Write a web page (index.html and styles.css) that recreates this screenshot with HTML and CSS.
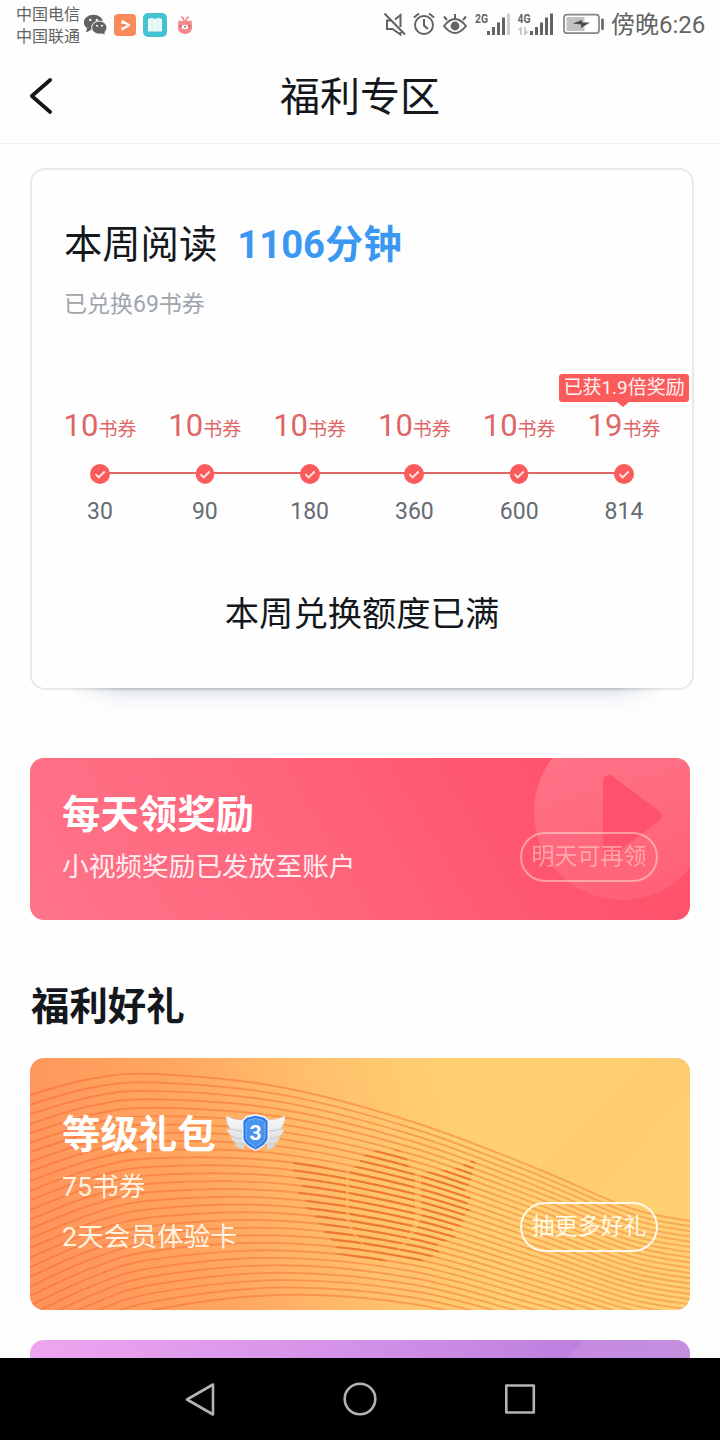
FILE: index.html
```html
<!DOCTYPE html>
<html lang="zh-CN">
<head>
<meta charset="utf-8">
<title>福利专区</title>
<link rel="stylesheet" href="styles.css">
</head>
<body>
<div class="status">
  <div class="carriers"><span>中国电信</span><span>中国联通</span></div>
  <svg class="apps" width="112" height="28" viewBox="84 12 112 28">
    <g fill="#636363">
      <ellipse cx="93.500" cy="22.300" rx="9.700" ry="7.600"/><path d="M87 28l-1 4.500 6-3z"/>
      <ellipse cx="99.300" cy="27.600" rx="7.700" ry="6.600" stroke="#fefefe" stroke-width="1"/><path d="M101 33l3.500 1.500 0-4z"/>
    </g>
    <g fill="#fff"><circle cx="90.300" cy="19.900" r="1.200"/><circle cx="96.800" cy="19.900" r="1.200"/><circle cx="97" cy="25.700" r="1"/><circle cx="102" cy="25.700" r="1"/></g>
    <rect x="114" y="14" width="22" height="22" rx="4" fill="#fb8a5b"/>
    <path d="M122.500 24v-2.800l6.500 3.800-6.500 4.200v-2" fill="none" stroke="#fff" stroke-width="2.200" stroke-linejoin="round"/>
    <rect x="143" y="13" width="24" height="24" rx="5" fill="#43c3cf"/>
    <path d="M148 19q3.500-2 7 0 3.500-2 7 0v12.500h-14z" fill="#eefafa"/>
    <path d="M152 18.500v13M158 18.500v13" stroke="#c6eef0" stroke-width=".8"/>
    <g fill="none" stroke="#f0898c" stroke-width="1.400"><path d="M184 21.500q0-4-3-4.500M186 21.500q0-4 3-4.500"/></g>
    <path d="M178.500 20.500q3 1.200 6.500-.5 3.500 1.700 6.500.5l.7 6.500q-.3 7-7.200 7t-7.200-7z" fill="#f28a8d"/>
    <ellipse cx="185" cy="27" rx="3.200" ry="2.200" fill="#fff"/>
    <g fill="#7d4650"><circle cx="185" cy="26.600" r=".9"/><circle cx="180.500" cy="26" r=".7"/><circle cx="189.500" cy="26" r=".7"/></g>
  </svg>
  <svg class="signals" width="224" height="28" viewBox="382 10 224 28">
    <g fill="none" stroke="#636363" stroke-width="2">
      <path d="M400.500 27V15l-5.500 4.500M391 20.500h-4v8.500h5.500l8 5.500v-2.500M384.500 13.500l20.500 21"/>
      <circle cx="424" cy="25" r="9"/><path d="M424 19v6.500l4 3.500M414 17.500l5-4M434 17.500l-5-4"/>
      <path d="M444 26q11-14 22 0-11 14-22 0zM455 18v-4M447 20l-3-3.500M463 20l3-3.500"/>
    </g>
    <circle cx="455" cy="26" r="4.400" fill="#636363"/>
    <g class="net"><text x="475" y="22.500" textLength="13" lengthAdjust="spacingAndGlyphs">2G</text><text x="517.500" y="22.500" textLength="13" lengthAdjust="spacingAndGlyphs">4G</text></g>
    <g stroke="#636363" stroke-width="3"><path d="M488.500 35v-4M493.500 35v-8M498.500 35V22.500M503.500 35V17.500M531.500 35v-4M536.500 35v-8M541.500 35V22.500M546.500 35V17.500M551.500 35V13.500"/><path d="M508.500 35V13.500" stroke="#cdcdcd"/></g>
    <path d="M518.500 30l2.500-2v7M525 27v7l2.500-2.500" fill="none" stroke="#c8c8c8" stroke-width="1.800"/>
    <rect x="564" y="14.700" width="35" height="18.500" rx="3" fill="none" stroke="#858585" stroke-width="1.700"/>
    <path d="M566.500 17h18v14h-18z" fill="#c2c2c2"/>
    <path d="M572.500 23.500l9.500-3.500v2.500h8l-9 5.500v-3.500z" fill="#4b4b4b"/>
    <rect x="601.200" y="18.500" width="2.600" height="11.500" rx="1" fill="#636363"/>
  </svg>
  <span class="time">傍晚6:26</span>
</div>
<header class="header">
  <svg class="back" width="24" height="38" viewBox="0 0 24 38"><path d="M21.200 3L2.800 19l18.400 16" fill="none" stroke="#14171c" stroke-width="3.700" stroke-linecap="round" stroke-linejoin="round"/></svg>
  <h1>福利专区</h1>
</header>
<main class="content">
  <section class="reading">
    <div class="reading-title">本周阅读<b>1106分钟</b></div>
    <div class="redeemed">已兑换69书券</div>
    <div class="steps">
      <div class="step"><div class="amount">10<small>书券</small></div><svg class="dot" viewBox="0 0 20 20"><circle cx="10" cy="10" r="10"/><path d="M5.500 10.200l3.200 3.300 6-6"/></svg><div class="minutes">30</div></div>
      <div class="step"><div class="amount">10<small>书券</small></div><svg class="dot" viewBox="0 0 20 20"><ellipse cx="10" cy="10" rx="9.300" ry="10"/><path d="M5.500 10.200l3.200 3.300 6-6"/></svg><div class="minutes">90</div></div>
      <div class="step"><div class="amount">10<small>书券</small></div><svg class="dot" viewBox="0 0 20 20"><circle cx="10" cy="10" r="10"/><path d="M5.500 10.200l3.200 3.300 6-6"/></svg><div class="minutes">180</div></div>
      <div class="step"><div class="amount">10<small>书券</small></div><svg class="dot" viewBox="0 0 20 20"><circle cx="10" cy="10" r="10"/><path d="M5.500 10.200l3.200 3.300 6-6"/></svg><div class="minutes">360</div></div>
      <div class="step"><div class="amount">10<small>书券</small></div><svg class="dot" viewBox="0 0 20 20"><ellipse cx="10" cy="10" rx="9.300" ry="10"/><path d="M5.500 10.200l3.200 3.300 6-6"/></svg><div class="minutes">600</div></div>
      <div class="step"><div class="bubble">已获1.9倍奖励</div><div class="amount">19<small>书券</small></div><svg class="dot" viewBox="0 0 20 20"><circle cx="10" cy="10" r="10"/><path d="M5.500 10.200l3.200 3.300 6-6"/></svg><div class="minutes">814</div></div>
    </div>
    <div class="full">本周兑换额度已满</div>
  </section>
  <div class="card-shadow"></div>
  <section class="banner daily">
    <svg class="art" viewBox="0 0 660 162">
      <defs><linearGradient id="disc" x1="0" y1="0" x2="0" y2="1"><stop offset="0" stop-color="#fff" stop-opacity=".2"/><stop offset="1" stop-color="#fff" stop-opacity=".08"/></linearGradient></defs>
      <circle cx="592" cy="54" r="88" fill="url(#disc)"/>
      <path d="M579 23v70l47-35z" fill="#ff526c" stroke="#ff526c" stroke-width="12" stroke-linejoin="round"/>
    </svg>
    <div class="banner-text"><h2>每天领奖励</h2><p>小视频奖励已发放至账户</p></div>
    <div class="pill faded">明天可再领</div>
  </section>
  <h2 class="section-title">福利好礼</h2>
  <section class="banner level">
    <svg class="art" viewBox="0 0 660 252">
      <defs>
        <linearGradient id="wave" gradientUnits="userSpaceOnUse" x1="0" y1="0" x2="660" y2="0"><stop offset="0" stop-color="#f9703c" stop-opacity=".66"/><stop offset=".5" stop-color="#f5803e" stop-opacity=".6"/><stop offset="1" stop-color="#f29045" stop-opacity=".6"/></linearGradient>
        <linearGradient id="ray" x1="0" y1="0" x2="1" y2="1"><stop offset="0" stop-color="#f7b95f" stop-opacity=".4"/><stop offset=".7" stop-color="#f7b95f" stop-opacity="0"/></linearGradient>
        <clipPath id="wings">
          <path d="M263 101l53 13v48q5 22 42 42l-28-3-30-7 8-6-15-14 8-3-19-9 4-5-14-10 5-3-12-13 8-3-10-13z"/>
          <path d="M319 116l1-6 8-2 4-10 15-6h22l8 8 2 9 6 6v43q-3 24-29 44-33-18-37-44z"/>
          <path d="M391 114v43q-5 26-30 41l27 7 21-10-2-8 19-8-4-7 13-6-3-6 9-9-4-5 4-7-7-5 6-9 6-24-19 9-26 4z"/>
        </clipPath>
      </defs>
      <path d="M622 0L505 115l155 49V0z" fill="url(#ray)"/>
      <g id="waves" fill="none" stroke="url(#wave)" stroke-width="1.900"></g>
      <g clip-path="url(#wings)"><g id="emblem" fill="none" stroke="#ed7a31" stroke-width="2.100"></g></g>
    </svg>
    <div class="banner-text">
      <h2>等级礼包<svg class="badge" width="62" height="40" viewBox="0 0 62 40">
        <defs><linearGradient id="silver" x1="0" y1="0" x2="0" y2="1"><stop offset="0" stop-color="#fafafa"/><stop offset="1" stop-color="#d4d4d4"/></linearGradient></defs>
        <g id="wing"><path d="M1 3q8 4 18 4v29q-5 0-9-4l3-1q-6-2-7-7h3q-6-2-7-8l4 1Q1 11 1 3z" fill="url(#silver)" stroke="#d5ceca" stroke-width=".5"/><path d="M6 16q5 2 11 2M9 24q4 2 8 1.500M13 31l5 0" fill="none" stroke="#c9c9c9"/></g>
        <use href="#wing" transform="translate(61 0) scale(-1 1)"/>
        <path d="M30.500 1l9 2 4.500 4v19q-2 7-13.500 12Q19 33 17 26V7l4.500-4z" fill="#eaf3ff"/>
        <path d="M30.500 2.700l8.500 2 3.500 3.300v18q-2 6-12 10.500Q20.500 32 18.500 26V8L22 4.700z" fill="#2b7ae4"/>
        <path d="M30.500 5.500l7 1.500 2.500 2.500v16q-2 4.500-9.500 8.500-7.500-4-9.500-8.500v-16L23.500 7z" fill="#4793ef" stroke="#bcd9ff" stroke-width="1" stroke-dasharray="1.300 1.300"/>
        <text x="30.500" y="26.500" text-anchor="middle">3</text>
      </svg></h2>
      <p>75书券</p><p>2天会员体验卡</p>
    </div>
    <div class="pill">抽更多好礼</div>
  </section>
  <section class="banner next"><svg class="art" viewBox="0 0 660 162"><path d="M554 0l-19 20v142h125V0z" fill="#c993e1" opacity=".6"/></svg></section>
</main>
<nav class="nav">
  <svg width="720" height="82" viewBox="0 0 720 82" fill="none" stroke="#b3b3b3" stroke-width="2.600" stroke-linejoin="round"><path d="M213 26.500v30L187 41.500z"/><circle cx="360" cy="41" r="15.300"/><rect x="506.300" y="27.500" width="27.500" height="27"/></svg>
</nav>
<script src="waves.js"></script>
</body>
</html>
```
FILE: styles.css
```css
* { box-sizing: border-box; margin: 0; padding: 0; }
body { width: 720px; height: 1440px; overflow: hidden; display: flex; flex-direction: column; background: #fefefe; color: #14171c; font-family: Roboto, "Noto Sans CJK SC", sans-serif; }
svg { display: block; flex: none; }
.status { height: 48px; flex: none; display: flex; align-items: flex-start; padding: 2px 0 0 16px; color: #636363; }
.carriers { display: flex; flex-direction: column; width: 68px; flex: none; padding-top: 2px; font-size: 16px; line-height: 22px; white-space: nowrap; }
.apps { margin-top: 10px; }
.signals { margin: 8px 0 0 186px; }
.net { font: bold 13px Roboto, sans-serif; fill: #636363; }
.time { margin-left: 5px; font-size: 24px; line-height: 47px; white-space: nowrap; }
.header { height: 96px; flex: none; display: grid; grid-template-columns: 60px 1fr 60px; align-items: center; border-bottom: 1px solid #f0f0f0; }
.back { margin-left: 29px; }
.header h1 { padding-top: 4px; text-align: center; font-size: 40px; line-height: 60px; font-weight: 400; }
.content { flex: 1; min-height: 0; overflow: hidden; padding: 24px 30px 0; }
.reading { width: 664px; height: 522px; border: 2px solid #e9e9e9; border-radius: 15px; background: #fefefe; padding: 47px 0 0 32px; }
.reading-title { font-size: 38.300px; line-height: 56px; white-space: nowrap; }
.reading-title b { margin-left: 20px; color: #3b98f2; }
.redeemed { margin-top: 15px; font-size: 23px; line-height: 34px; color: #9ea5ad; }
.steps { display: grid; grid-template-columns: repeat(6, 104.800px); margin: 85px 0 0 -16.400px; }
.step { position: relative; display: flex; flex-direction: column; align-items: center; }
.step:not(:last-child)::after { content: ""; position: absolute; left: calc(50% + 9px); right: calc(-50% + 9px); top: 65px; height: 2px; background: #e06766; }
.amount { font-size: 31px; line-height: 38px; height: 38px; color: #df6666; white-space: nowrap; }
.amount small { font-size: 19px; }
.dot { width: 20px; height: 20px; margin-top: 19px; fill: #fc5b5c; }
.dot path { fill: none; stroke: #ffe9e9; stroke-width: 1.800; }
.minutes { margin-top: 12px; font-size: 23px; line-height: 32px; color: #656b73; }
.bubble { position: absolute; top: -33px; left: -12.500px; width: 130px; height: 28px; border-radius: 3px; background: #fc5b5c; color: #fff2f2; font-size: 19px; line-height: 28px; text-align: center; white-space: nowrap; }
.bubble::after { content: ""; position: absolute; top: 28px; left: 58px; border: 6px solid transparent; border-top: 5px solid #fc5b5c; border-bottom: 0; }
.full { margin-top: 61px; padding-right: 32px; font-size: 34.300px; line-height: 50px; text-align: center; }
.card-shadow { width: 600px; height: 28px; margin: -2px 0 0 38px; background: linear-gradient(rgba(85,105,125,.28), rgba(120,138,170,.14) 18%, rgba(150,165,190,.05) 50%, transparent); mask-image: linear-gradient(90deg, transparent, #000 9%, #000 91%, transparent); }
.banner { position: relative; width: 660px; border-radius: 14px; overflow: hidden; color: #fff; display: flex; justify-content: space-between; padding: 0 32px; }
.art { position: absolute; inset: 0; width: 100%; }
.banner-text, .pill { position: relative; }
.banner h2 { font-size: 38.400px; line-height: 56px; font-weight: 700; }
.banner p { font-size: 26.700px; line-height: 40px; color: rgba(255,255,255,.9); }
.pill { width: 138px; height: 50px; border: 2px solid #fffbe8; border-radius: 25px; font-size: 23px; line-height: 46px; text-align: center; white-space: nowrap; color: #fffbe8; }
.faded { opacity: .43; }
.daily { height: 162px; margin-top: 42px; padding-top: 29px; background: linear-gradient(60deg, #ff7489 0%, #ff667d 40%, #ff566f 72%, #ff4f69 100%); }
.daily p { margin-top: 4px; }
.daily .pill { margin-top: 45px; }
.section-title { margin: 58px 0 23px 1px; font-size: 38.400px; line-height: 57px; font-weight: 700; }
.level { height: 252px; padding-top: 49px; background: linear-gradient(75deg, #ff9158 0%, #ffa661 28%, #ffc06b 48%, #ffcf72 65%, #ffcf72 100%); }
.level h2 { display: flex; gap: 9px; align-items: center; }
.level p { line-height: 50px; color: rgba(255,253,240,.93); }
.level h2 + p { margin-top: -1px; }
.level .pill { margin-top: 95px; }
.badge { margin-top: -4px; }
.badge text { font: bold 21px Roboto, sans-serif; fill: #fff; }
.next { height: 162px; margin-top: 30px; background: linear-gradient(85deg, #efa6f0, #d391e8 50%, #bd80df 83%, #be8ade); }
.nav { height: 82px; flex: none; background: #000; }
```
FILE: waves.js
```js
// Contour lines blended between an upper and a lower curve.
const xs = [0, 60, 123, 250, 383, 503, 600, 660];
const upper = [37, 21, 16, 29, 64, 109, 150, 163];
const lower = [305, 274, 252, 237, 246, 275, 300, 309];
const COUNT = 28;

function smooth(points) {
  let d = `M${points[0]}`;
  for (let i = 0; i < points.length - 1; i++) {
    const a = points[i - 1] || points[i], b = points[i], c = points[i + 1], e = points[i + 2] || c;
    d += `C${b[0] + (c[0] - a[0]) / 6} ${b[1] + (c[1] - a[1]) / 6} ${c[0] - (e[0] - b[0]) / 6} ${c[1] - (e[1] - b[1]) / 6} ${c}`;
  }
  return d;
}

for (let n = 0; n <= COUNT; n++) {
  const t = n / COUNT;
  const d = smooth(xs.map((x, i) => [x, upper[i] + (lower[i] - upper[i]) * t]));
  for (const id of ["waves", "emblem"]) {
    const path = document.createElementNS("http://www.w3.org/2000/svg", "path");
    path.setAttribute("d", d);
    document.getElementById(id).appendChild(path);
  }
}
```
